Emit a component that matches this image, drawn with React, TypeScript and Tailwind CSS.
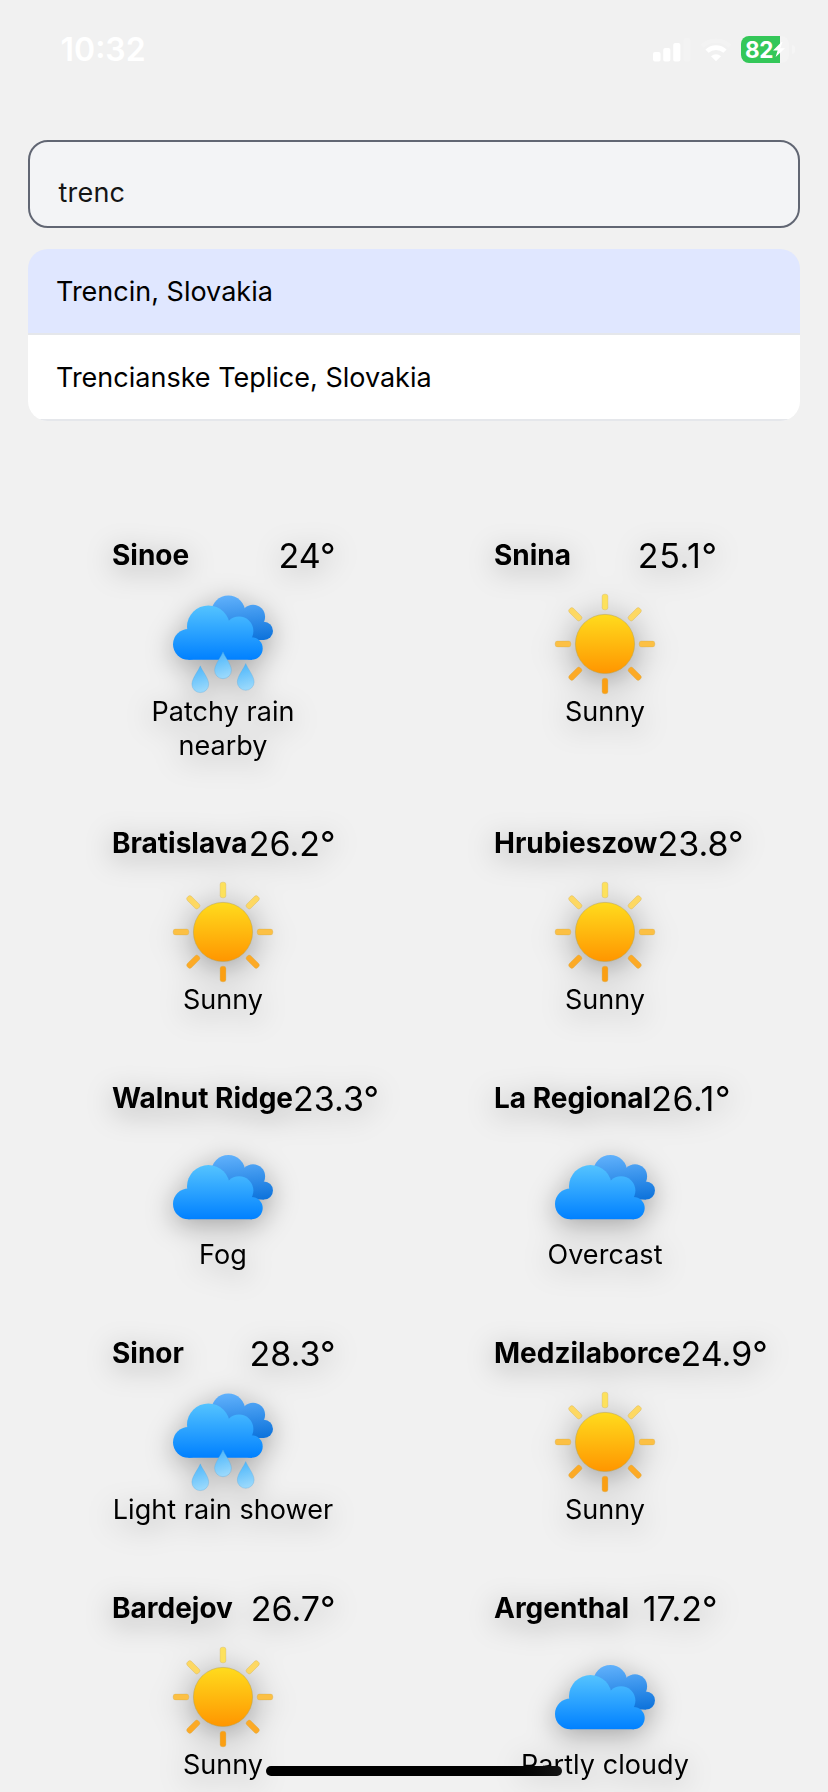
import clsx from "clsx";

type IconKind = "sun" | "cloud" | "rain";

interface City {
  name: string;
  temp: string;
  condition: string;
  icon: IconKind;
}

const cities: City[] = [
  { name: "Sinoe", temp: "24°", condition: "Patchy rain nearby", icon: "rain" },
  { name: "Snina", temp: "25.1°", condition: "Sunny", icon: "sun" },
  { name: "Bratislava", temp: "26.2°", condition: "Sunny", icon: "sun" },
  { name: "Hrubieszow", temp: "23.8°", condition: "Sunny", icon: "sun" },
  { name: "Walnut Ridge", temp: "23.3°", condition: "Fog", icon: "cloud" },
  { name: "La Regional", temp: "26.1°", condition: "Overcast", icon: "cloud" },
  { name: "Sinor", temp: "28.3°", condition: "Light rain shower", icon: "rain" },
  { name: "Medzilaborce", temp: "24.9°", condition: "Sunny", icon: "sun" },
  { name: "Bardejov", temp: "26.7°", condition: "Sunny", icon: "sun" },
  { name: "Argenthal", temp: "17.2°", condition: "Partly cloudy", icon: "cloud" },
];

const suggestions = ["Trencin, Slovakia", "Trencianske Teplice, Slovakia"];

/** Gradients shared by every weather icon. */
function IconDefs() {
  return (
    <svg className="absolute size-0" aria-hidden="true">
      <defs>
        <linearGradient id="sunDisc" gradientUnits="userSpaceOnUse" x1="50" y1="20" x2="50" y2="80">
          <stop offset="0" stopColor="#ffdc1e" />
          <stop offset="1" stopColor="#ff9500" />
        </linearGradient>
        <linearGradient id="cloudFront" gradientUnits="userSpaceOnUse" x1="45" y1="11" x2="45" y2="66">
          <stop offset="0" stopColor="#55c4ff" />
          <stop offset="1" stopColor="#0080ff" />
        </linearGradient>
        <linearGradient id="cloudBack" gradientUnits="userSpaceOnUse" x1="70" y1="1" x2="74" y2="46">
          <stop offset="0" stopColor="#5fb0fb" />
          <stop offset="1" stopColor="#0f74dc" />
        </linearGradient>
        <linearGradient id="drop" x1="0" y1="0" x2="0.2" y2="1">
          <stop offset="0" stopColor="#45b3fb" />
          <stop offset="1" stopColor="#98d8fc" />
        </linearGradient>
      </defs>
    </svg>
  );
}

/** Rays clockwise from the top, fading from pale yellow to orange. */
const rays = [
  { angle: 0, fill: "#fde15c" },
  { angle: 45, fill: "#fdd862" },
  { angle: 90, fill: "#fcc044" },
  { angle: 135, fill: "#fcaa26" },
  { angle: 180, fill: "#fb9f12" },
  { angle: 225, fill: "#fcaa26" },
  { angle: 270, fill: "#fcc044" },
  { angle: 315, fill: "#fdd862" },
];

function Sun() {
  return (
    <g>
      {rays.map(({ angle, fill }) => (
        <rect
          key={angle}
          x="47.1"
          y="0.2"
          width="5.8"
          height="15.6"
          rx="2.2"
          fill={fill}
          stroke="#c9a24a"
          strokeWidth="0.3"
          transform={`rotate(${angle} 50 50)`}
        />
      ))}
      <circle cx="50" cy="50" r="29.6" fill="url(#sunDisc)" stroke="#b9a04a" strokeWidth="0.5" />
    </g>
  );
}

function Clouds() {
  return (
    <g>
      <g fill="url(#cloudBack)">
        <circle cx="55.3" cy="18.4" r="17" />
        <circle cx="80" cy="22.8" r="12.1" />
        <circle cx="90.9" cy="36.9" r="9.1" />
        <path d="M50 20H80L91 30V46H60Z" />
      </g>
      <g fill="url(#cloudFront)">
        <circle cx="15.4" cy="50.3" r="15.4" />
        <circle cx="35.4" cy="32.8" r="21.4" />
        <circle cx="66" cy="37" r="14.4" />
        <circle cx="78.5" cy="54.5" r="11.2" />
        <path d="M15.4 65.7V46L18 40H74L79 46V65.7Z" />
      </g>
    </g>
  );
}

const dropPath = "M0 0C1.6 4.6 8.4 12.6 8.4 18.4A8.4 8.4 0 0 1-8.4 18.4C-8.4 12.6-1.6 4.6 0 0Z";

function Rain() {
  return (
    <g>
      <Clouds />
      <g fill="url(#drop)" stroke="#5aa9dc" strokeWidth="0.35">
        <path d={dropPath} transform="translate(27.3 71.8)" />
        <path d={dropPath} transform="translate(50 57.9)" />
        <path d={dropPath} transform="translate(72.7 69.5)" />
      </g>
    </g>
  );
}

function WeatherIcon({ kind }: { kind: IconKind }) {
  return (
    <svg viewBox="0 0 100 100" className="size-[100px] shrink-0 overflow-visible">
      {kind === "sun" && <Sun />}
      {kind === "rain" && <Rain />}
      {kind === "cloud" && (
        <g transform="translate(0 16.6)">
          <Clouds />
        </g>
      )}
    </svg>
  );
}

function CityCard({ city }: { city: City }) {
  return (
    <article className="flex flex-col items-center px-20 drop-shadow-[0_6px_14px_rgba(0,0,0,0.32)]">
      <header className="flex h-[42px] w-full items-center justify-between whitespace-nowrap">
        <h2 className="pb-px text-[28px] leading-[34px] font-bold">{city.name}</h2>
        <span
          className={clsx(
            "-mr-[1.5px] pt-px text-[34px] leading-[41px]",
            city.temp.endsWith(".1°") && "tracking-[0.6px]",
          )}
        >
          {city.temp}
        </span>
      </header>
      <div className="mt-[18px]">
        <WeatherIcon kind={city.icon} />
      </div>
      <p
        className={clsx(
          "mt-px min-h-[34px] text-center text-[27px] leading-[33.5px] tracking-[0.05px]",
          city.condition === "Patchy rain nearby" ? "w-[180px]" : "whitespace-nowrap",
        )}
      >
        {city.condition}
      </p>
    </article>
  );
}

function StatusBar() {
  return (
    <div className="flex h-[140px] shrink-0 items-start justify-between pt-[30px] pr-[33px] pl-[60.5px] text-white">
      <time className="text-[32px] leading-[40px] font-semibold">10:32</time>
      <div className="flex pt-1.5">
        <svg viewBox="0 0 38 27" className="h-[27px] w-[38px]" fill="#fff">
          <rect x="0" y="16" width="7.6" height="9.5" rx="2" />
          <rect x="10.2" y="12" width="7.2" height="13.5" rx="2" />
          <rect x="20.2" y="7" width="7.2" height="18.5" rx="2" />
          <rect x="30.4" y="2" width="7.2" height="23.5" rx="2" opacity="0.15" />
        </svg>
        <svg viewBox="0 0 32 27" className="ml-[9px] h-[27px] w-8" fill="none" stroke="#fff">
          <path d="M2.3 10.2A19.6 19.6 0 0 1 29.7 10.2" strokeWidth="4.4" opacity="0.2" />
          <path d="M7 15.2A13 13 0 0 1 25 15.2" strokeWidth="4.6" />
          <path d="M16 25.2L11 20.3A7.2 7.2 0 0 1 21 20.3Z" fill="#fff" stroke="none" />
        </svg>
        <div className="ml-[9px] flex items-center">
          <div className="flex h-[27px] w-[48px] overflow-hidden rounded-lg bg-[#f4f4f4]">
            <div className="flex w-[39px] shrink-0 items-center bg-[#34c759] pl-1">
              <span className="text-[22.5px] leading-[27px] font-bold tracking-[-0.3px]">82</span>
              <svg viewBox="0 0 12 15" className="h-[15px] w-3 shrink-0" fill="#fff">
                <path d="M8.5 0L0 8.6H4.6L2.6 15L12 6.2H7.2L9.6 0Z" />
              </svg>
            </div>
          </div>
          <div className="ml-[3px] h-[9px] w-[3px] rounded-r-full bg-[#f5f5f5]" />
        </div>
      </div>
    </div>
  );
}

export default function App() {
  return (
    <main className="relative flex h-[1792px] w-[828px] flex-col overflow-hidden bg-[#f1f1f1] font-['Inter',sans-serif] text-black">
      <IconDefs />
      <StatusBar />

      <section className="mx-7 shrink-0">
        <div className="h-[88px] rounded-[20px] border-2 border-[#616673] bg-[#f3f4f6] pt-[34px] pl-[28.5px] text-[27px] leading-[34px] tracking-[0.2px] text-[#151515]">
          trenc
        </div>
        <ul className="mt-[21px] overflow-hidden rounded-[20px]">
          {suggestions.map((place, index) => (
            <li
              key={place}
              className={clsx(
                "h-[86px] border-b-2 border-gray-200 pt-[25.5px] pl-[28px] text-[27px] leading-[34px]",
                index === 0 ? "bg-indigo-100" : "bg-white",
              )}
            >
              {place}
            </li>
          ))}
        </ul>
      </section>

      <section className="mx-8 mt-[113px] grid shrink-0 grid-cols-2 gap-y-[60px]">
        {cities.map((city) => (
          <CityCard key={city.name} city={city} />
        ))}
      </section>

      <div className="absolute bottom-4 left-[266px] h-2.5 w-[296px] rounded-full bg-linear-to-r from-black from-70% to-[#141414]" />
    </main>
  );
}
